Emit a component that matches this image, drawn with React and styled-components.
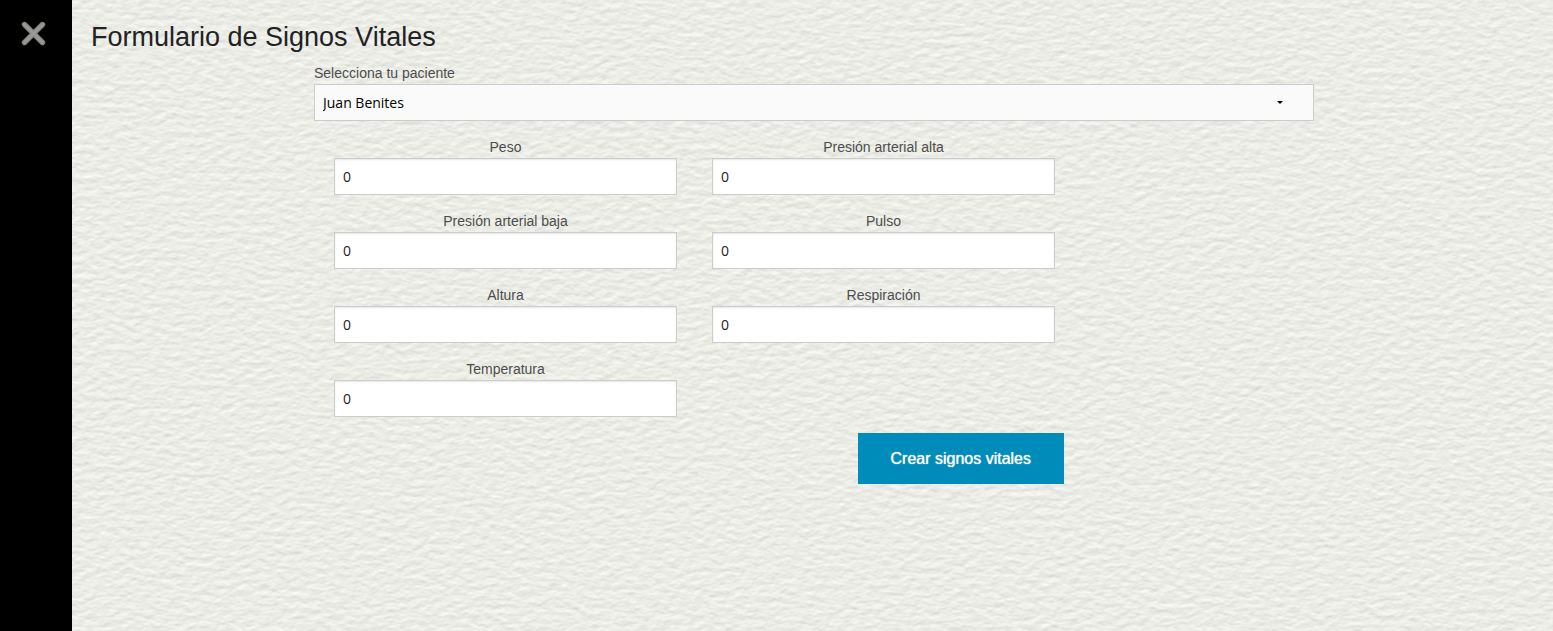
import React from 'react';
import styled, { createGlobalStyle } from 'styled-components';

const GlobalStyle = createGlobalStyle`
  *, *::before, *::after { box-sizing: border-box; }
  body {
    margin: 0;
    background: #ebebe6;
    color: #222;
    font-family: "Liberation Sans", Helvetica, Arial, sans-serif;
  }
`;

const Page = styled.div`
  position: relative;
  isolation: isolate;
  display: flex;
  min-height: 100vh;
`;

const Texture = styled.svg`
  position: absolute;
  inset: 0;
  z-index: -1;
  width: 100%;
  height: 100%;
`;

const Sidebar = styled.aside`
  flex: 0 0 72px;
  display: flex;
  justify-content: center;
  align-items: flex-start;
  padding: 20px 5px 0 0;
  background: #000;
`;

const CloseButton = styled.button`
  display: flex;
  padding: 0;
  border: 0;
  background: none;
  cursor: pointer;
`;

const Main = styled.main`
  flex: 1;
  min-width: 0;
  padding: 19px 16px 32px 19px;
`;

const Title = styled.h1`
  margin: 0 0 7px;
  font-size: 27px;
  line-height: 37px;
  font-weight: 400;
`;

const Form = styled.form`
  max-width: 1000px;
  margin: 0 auto;
`;

const Field = styled.div`
  display: flex;
  flex-direction: column;
  text-align: ${({ $align }) => $align || 'center'};
`;

const Label = styled.label`
  color: #4d4d4d;
  font-size: 14px;
  line-height: 21px;
`;

const Input = styled.input`
  width: 100%;
  height: 37px;
  padding: 8px;
  border: 1px solid #ccc;
  border-radius: 0;
  background: #fff;
  box-shadow: inset 0 1px 2px rgba(0, 0, 0, 0.1);
  color: #222;
  font-family: "Open Sans", sans-serif;
  font-size: 14px;
`;

const SelectBox = styled.div`
  position: relative;
`;

const Select = styled.select`
  appearance: none;
  display: block;
  width: 100%;
  height: 37px;
  padding: 0 40px 0 8px;
  border: 1px solid #ccc;
  border-radius: 0;
  background: #fafafa;
  color: #000;
  font-family: "Open Sans", sans-serif;
  font-size: 14px;
`;

const Caret = styled.svg`
  position: absolute;
  top: 17px;
  right: 31px;
  pointer-events: none;
`;

const Fields = styled.div`
  display: grid;
  grid-template-columns: repeat(2, 1fr);
  gap: 16px 35px;
  max-width: 721px;
  margin: 16px 20px;
`;

const Actions = styled.div`
  display: flex;
  justify-content: flex-end;
  max-width: 750px;
`;

const SubmitButton = styled.button`
  padding: 16px 33px;
  border: 0;
  background: #008cba;
  color: #fff;
  font-family: inherit;
  font-size: 16px;
  line-height: 19px;
  text-shadow: 0 0 1px #fff;
  cursor: pointer;
`;

const FIELDS = [
  ['peso', 'Peso'],
  ['presion-alta', 'Presión arterial alta'],
  ['presion-baja', 'Presión arterial baja'],
  ['pulso', 'Pulso'],
  ['altura', 'Altura'],
  ['respiracion', 'Respiración'],
  ['temperatura', 'Temperatura'],
];

// Embossed paper grain, lit from above.
function PaperTexture() {
  return (
    <Texture aria-hidden="true">
      <filter id="paper" x="0" y="0" width="100%" height="100%" colorInterpolationFilters="sRGB">
        <feTurbulence type="fractalNoise" baseFrequency="0.1 0.17" numOctaves="4" seed="8" result="noise" />
        <feDiffuseLighting in="noise" surfaceScale="0.34" diffuseConstant="1.13" lightingColor="#eeefe9">
          <feDistantLight azimuth="260" elevation="61" />
        </feDiffuseLighting>
      </filter>
      <rect width="100%" height="100%" filter="url(#paper)" />
    </Texture>
  );
}

export default function App() {
  return (
    <>
      <GlobalStyle />
      <Page>
        <PaperTexture />
        <Sidebar>
          <CloseButton type="button" aria-label="Cerrar">
            <svg width="27" height="27" viewBox="0 0 27 27" fill="none" strokeLinecap="round">
              <path d="M4.5 4.5 22.5 22.5M22.5 4.5 4.5 22.5" stroke="#858681" strokeWidth="5.4" />
              <path d="M4.5 4.5 22.5 22.5M22.5 4.5 4.5 22.5" stroke="#989994" strokeWidth="3" />
            </svg>
          </CloseButton>
        </Sidebar>
        <Main>
          <Title>Formulario de Signos Vitales</Title>
          <Form onSubmit={(event) => event.preventDefault()}>
            <Field $align="left">
              <Label htmlFor="paciente">Selecciona tu paciente</Label>
              <SelectBox>
                <Select id="paciente" defaultValue="juan">
                  <option value="juan">Juan Benites</option>
                </Select>
                <Caret width="6" height="3" viewBox="0 0 6 3" aria-hidden="true">
                  <path d="M0 0H6L3 3Z" fill="#000" />
                </Caret>
              </SelectBox>
            </Field>
            <Fields>
              {FIELDS.map(([id, label]) => (
                <Field key={id}>
                  <Label htmlFor={id}>{label}</Label>
                  <Input id={id} type="text" inputMode="decimal" defaultValue="0" />
                </Field>
              ))}
            </Fields>
            <Actions>
              <SubmitButton type="submit">Crear signos vitales</SubmitButton>
            </Actions>
          </Form>
        </Main>
      </Page>
    </>
  );
}
